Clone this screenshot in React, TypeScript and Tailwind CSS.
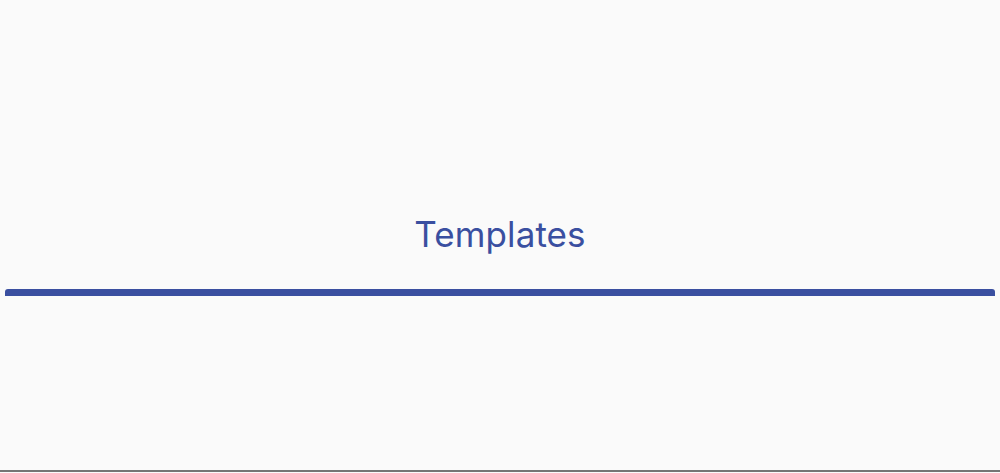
export default function App() {
  return (
    <div className="min-h-[473px] bg-[#fafafa]" style={{ fontFamily: "Inter, 'Noto Sans', sans-serif" }}>
      <div className="h-[472px] border-b-2 border-[#757575] flex flex-col">
        {/* tab label */}
        <div className="pt-[217px] flex justify-center">
          <span className="text-[35px] leading-none text-[#3a4fa0] tracking-[0.1px]">Templates</span>
        </div>
        {/* active indicator */}
        <div className="mt-[37px] mx-[5px] h-[7px] rounded-t-[3px] bg-[#3a4fa0]" />
      </div>
    </div>
  )
}
